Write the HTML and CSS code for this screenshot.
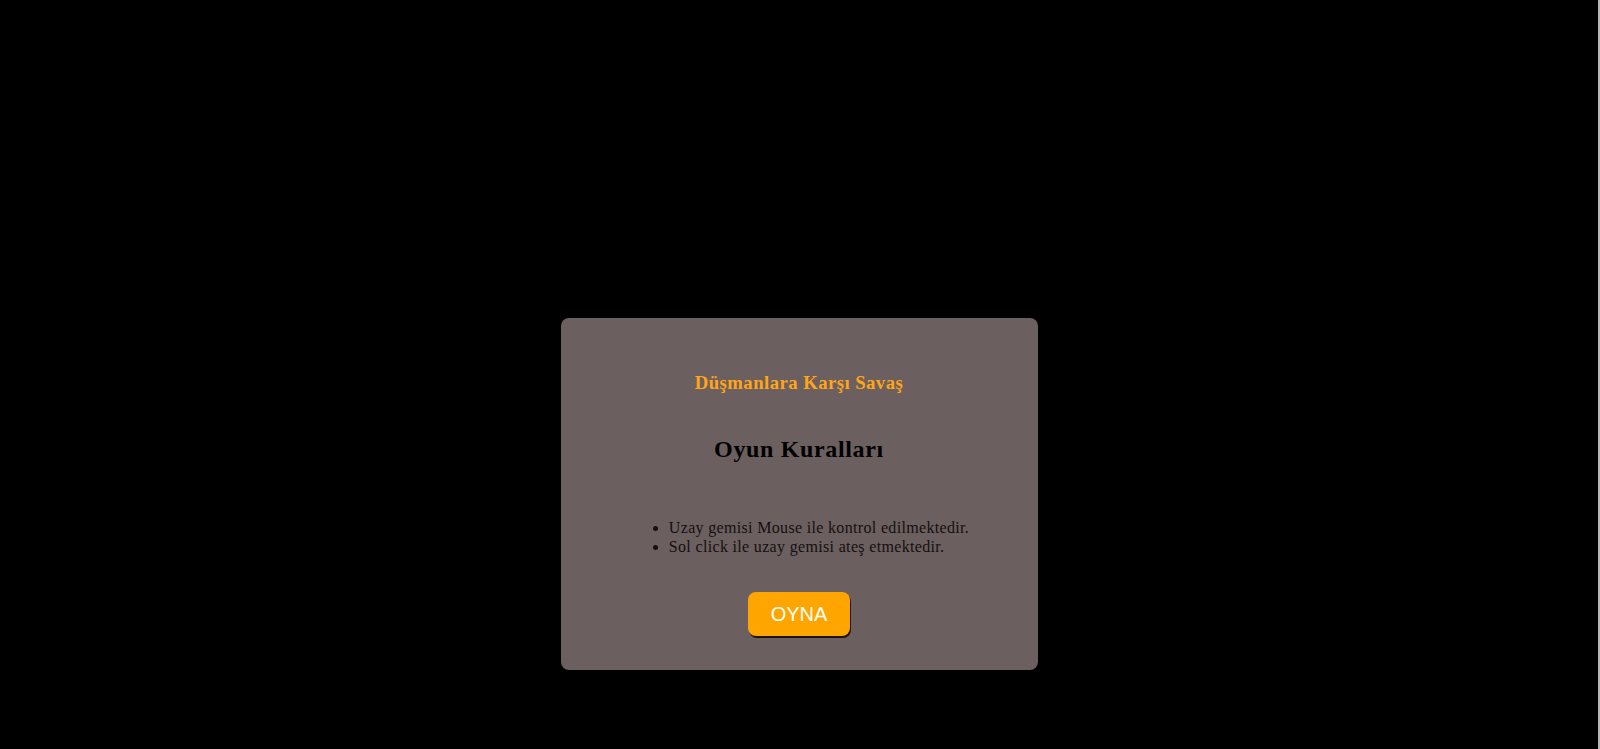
FILE: index.html
```html
<!DOCTYPE html>
<html lang="tr">
<head>
<meta charset="utf-8">
<title>Düşmanlara Karşı Savaş</title>
<link rel="stylesheet" href="styles.css">
</head>
<body>
<main class="stage">
  <section class="panel">
    <h3 class="title">Düşmanlara Karşı Savaş</h3>
    <h2 class="rules-title">Oyun Kuralları</h2>
    <ul class="rules">
      <li>Uzay gemisi Mouse ile kontrol edilmektedir.</li>
      <li>Sol click ile uzay gemisi ateş etmektedir.</li>
    </ul>
    <button class="play" type="button">OYNA</button>
  </section>
</main>
</body>
</html>
```
FILE: styles.css
```css
html, body {
  margin: 0;
  padding: 0;
  background: #000;
}
body {
  height: 749px;
  overflow: hidden;
  font-family: "Liberation Serif", "Times New Roman", serif;
}
.stage {
  box-sizing: border-box;
  height: 749px;
  border-right: 2px solid #b8b8b8;
  display: flex;
  flex-direction: column;
  align-items: center;
  padding-top: 318px;
}
.panel {
  box-sizing: border-box;
  width: 477px;
  height: 352px;
  background: #6b5f5f;
  border-radius: 8px;
  display: flex;
  flex-direction: column;
  align-items: center;
  padding-top: 54px;
}
.title {
  margin: 0;
  font-size: 18.72px;
  line-height: 22px;
  font-weight: bold;
  letter-spacing: 0.45px;
  color: #ffa51a;
}
.rules-title {
  margin: 41px 0 0;
  font-size: 24px;
  line-height: 28px;
  font-weight: bold;
  letter-spacing: 0.65px;
  color: #000;
}
.rules {
  margin: 55px 0 0;
  padding-left: 40px;
  width: fit-content;
  font-size: 16px;
  line-height: 19px;
  letter-spacing: 0.33px;
  color: #141010;
}
.play {
  margin-top: 36px;
  width: 102px;
  height: 44px;
  border: none;
  border-radius: 8px;
  background: #ffa500;
  color: #fff;
  font-family: "Liberation Sans", Arial, sans-serif;
  font-size: 20px;
  padding: 0;
  box-shadow: 1px 2px 0 #1e1406;
  cursor: pointer;
}
```
